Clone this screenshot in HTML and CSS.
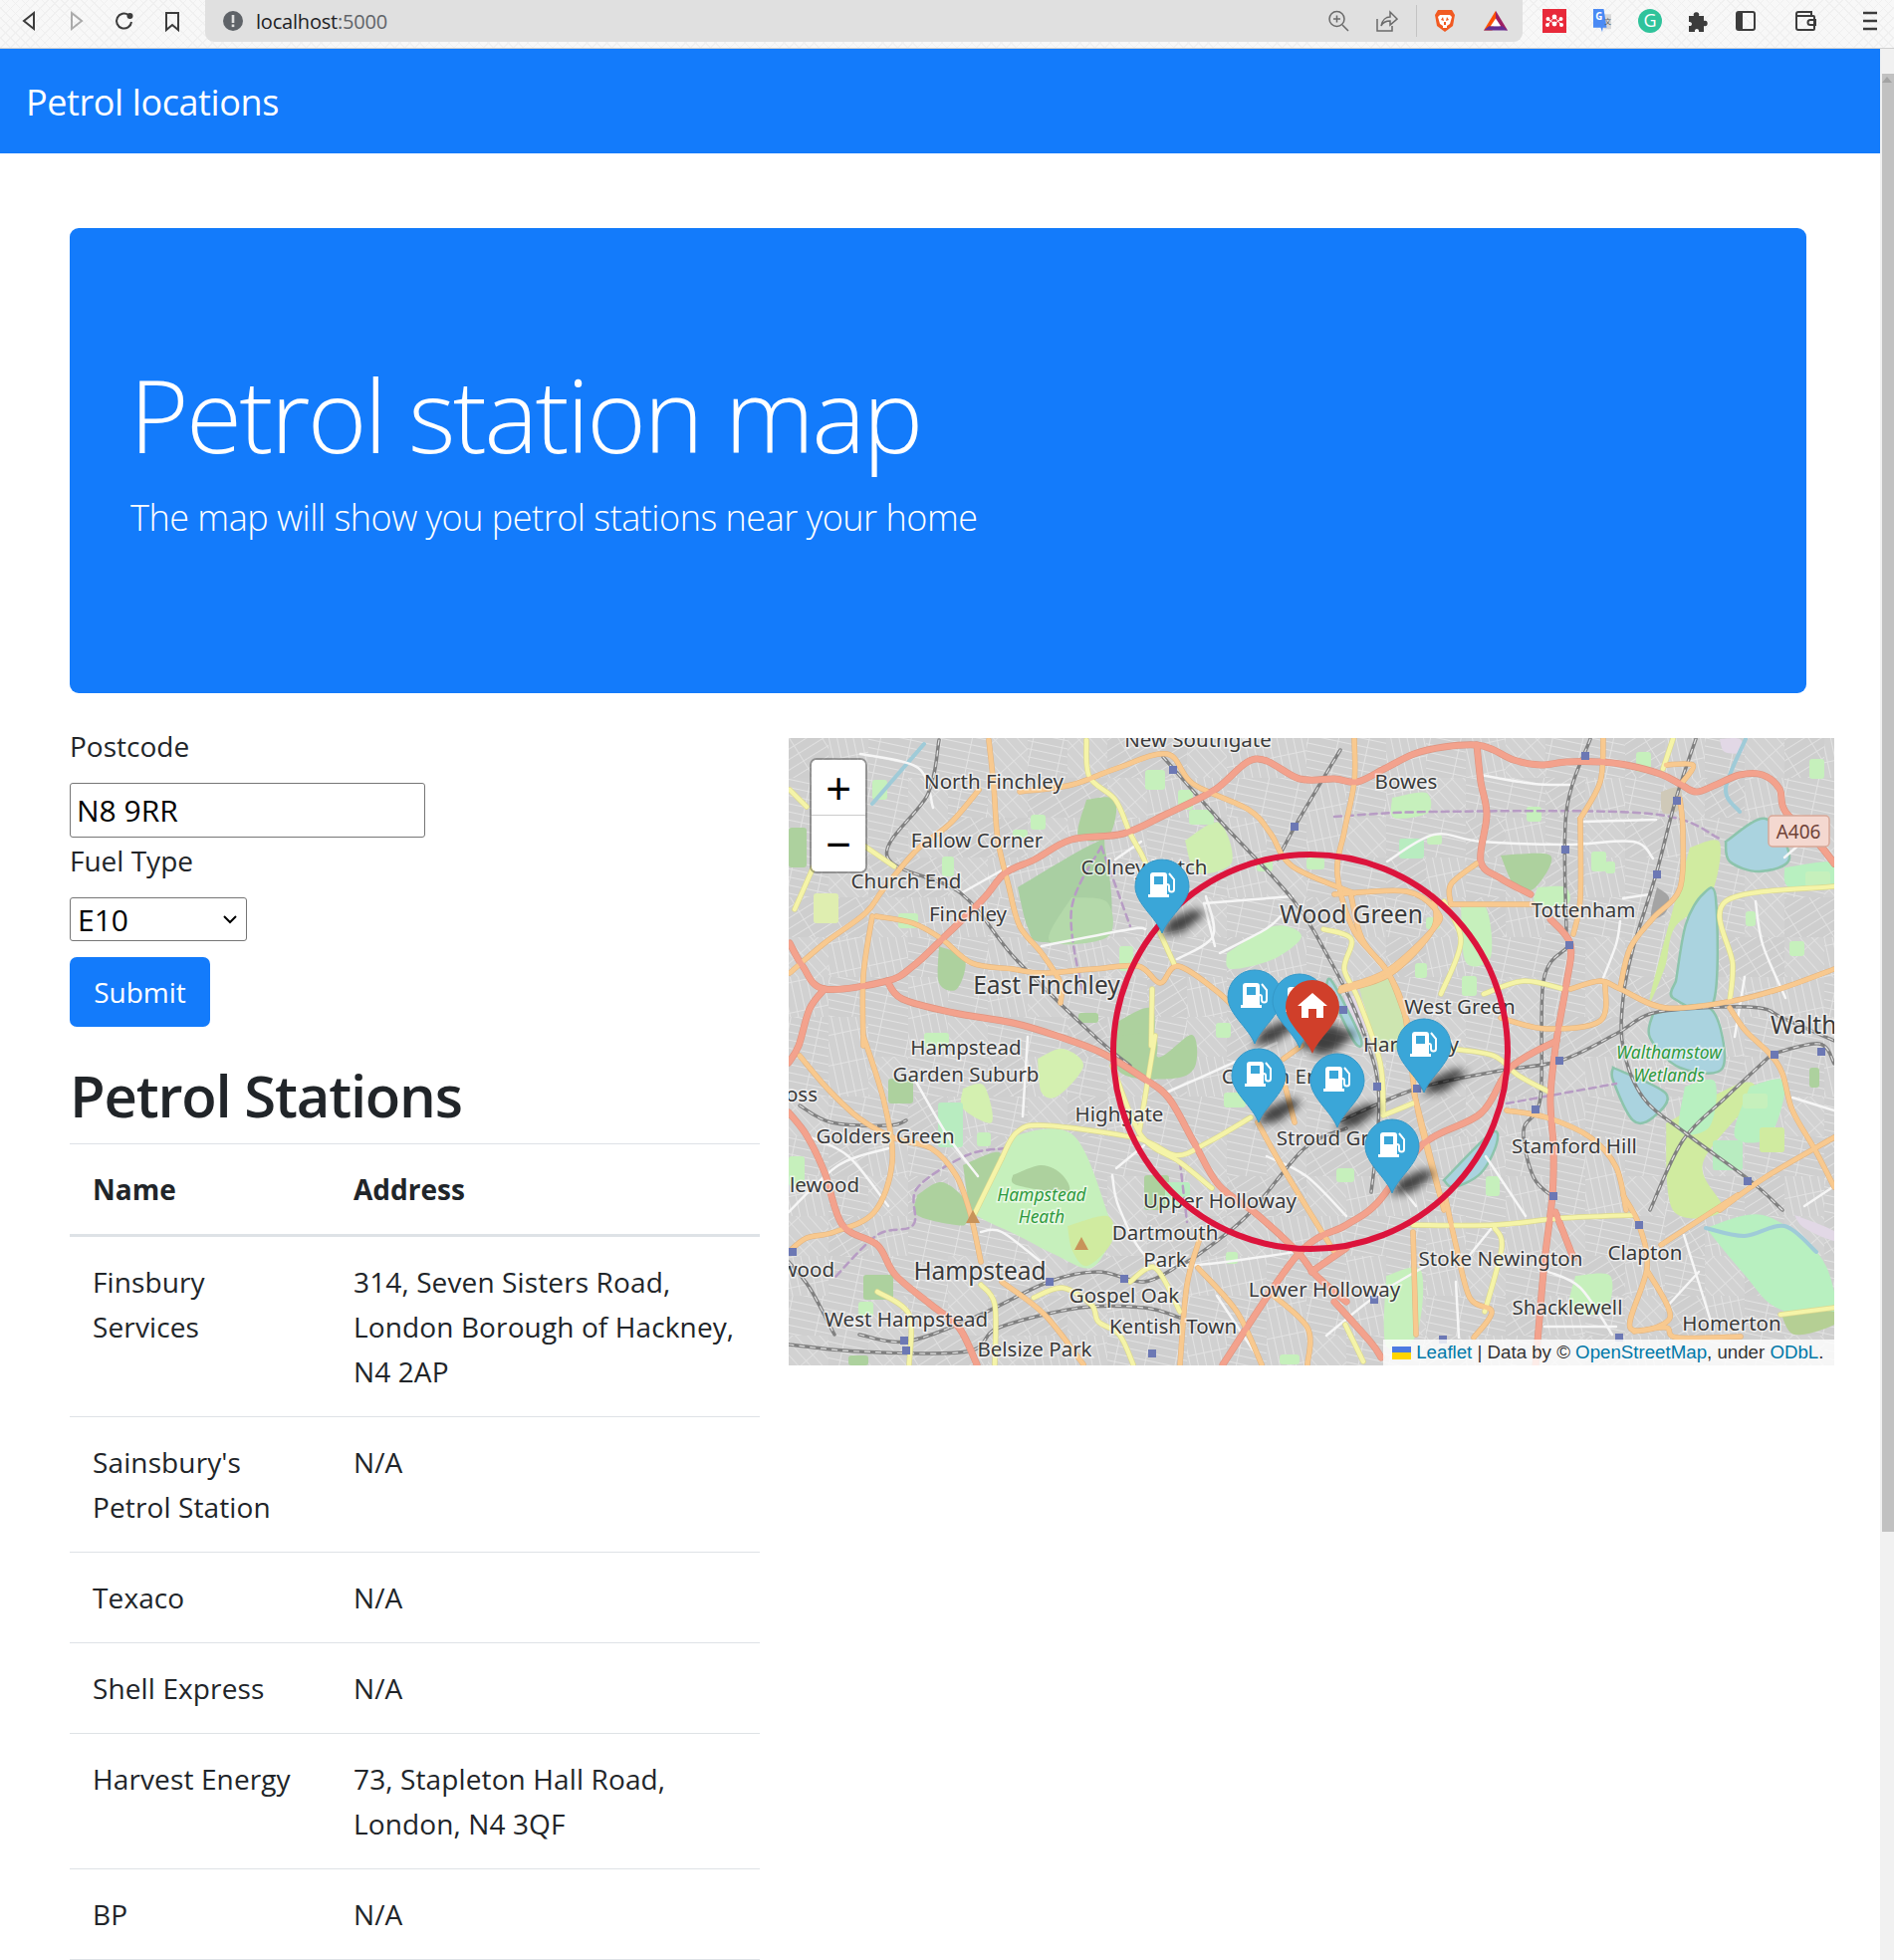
FILE: index.html
```html
<!DOCTYPE html>
<html lang="en">
<head>
    <meta charset="UTF-8">
    <title>Petrol locations</title>
    <link rel="stylesheet" href="styles.css">
</head>
<body>
<div class="toolbar">
    <svg class="ico" viewBox="0 0 24 24"><path d="M17 4 7 12l10 8z" class="line"/></svg>
    <svg class="ico dim" viewBox="0 0 24 24"><path d="M7 4l10 8-10 8z" class="line"/></svg>
    <svg class="ico" viewBox="0 0 24 24"><path d="M19 13a7.500 7.500 0 1 1-3-7" class="line"/><circle cx="17.500" cy="7" r="3" fill="#3c3c3c"/></svg>
    <svg class="ico" viewBox="0 0 24 24"><path d="M6 4h12v17l-6-5-6 5z" class="line"/></svg>
    <div class="address">
        <svg class="lock" viewBox="0 0 20 20"><circle cx="10" cy="10" r="10" fill="#5f6368"/><rect x="8.700" y="4" width="2.600" height="8" fill="#e0e0e0"/><rect x="8.700" y="13.500" width="2.600" height="2.600" fill="#e0e0e0"/></svg>
        <span class="url">localhost<span class="port">:5000</span></span>
        <div class="addr-tools">
            <svg class="ico" viewBox="0 0 24 24"><circle cx="10.500" cy="10" r="7.500" class="thin"/><path d="M16 16l6 6M10.500 6.500v7M7 10h7" class="thin"/></svg>
            <svg class="ico" viewBox="0 0 24 24"><path d="M3 10v12h15v-5M7 17c1-6 5-9 9-9V3l7 7-7 6v-4c-4 0-7 1-9 5z" class="thin"/></svg>
            <span class="sep"></span>
            <svg class="ico brave" viewBox="0 0 24 24"><path d="M5 1h14l3 5-2 11-8 6-8-6L2 6z" fill="#f15a22"/><path d="M7 6h10l2 2-2 7-3 2v2h-4v-2l-3-2-2-7z" fill="#fff"/><path d="M10 8l-2 3 3 1zM14 8l2 3-3 1zM11 13h2v3h-2z" fill="#f15a22"/></svg>
            <svg class="ico" viewBox="0 0 28 24"><path d="M14 0 0 23h10l4-13z" fill="#ff5000"/><path d="M14 0l14 23-8-1-6-12z" fill="#9e1f63"/><path d="M0 23l6-5h16l6 5z" fill="#662d91"/><path d="M14 9l6 9H8z" fill="#fff"/></svg>
        </div>
    </div>
    <div class="extensions">
        <svg class="ico" viewBox="0 0 24 24"><rect width="24" height="24" y="0" fill="#e8293a"/><circle cx="12" cy="8" r="2.400" fill="#fff"/><circle cx="5.500" cy="10" r="2" fill="#fff"/><circle cx="18.500" cy="10" r="2" fill="#fff"/><circle cx="5" cy="16" r="2" fill="#fff"/><circle cx="12" cy="15" r="2.400" fill="#fff"/><circle cx="19" cy="16" r="2" fill="#fff"/><path d="M5.500 10 12 15l6.500-5M5 16l7-8 7 8" stroke="#fff" stroke-width="1" fill="none"/></svg>
        <svg class="ico" viewBox="0 0 24 32"><rect x="14" y="7" width="10" height="20" fill="#d9d9d9"/><path d="M0 0h14l4 25H13l-1 6-2-6H0z" fill="#4a8af4"/><text x="3" y="15" class="ext-g">G</text><text x="15" y="20" class="ext-zh">文</text></svg>
        <svg class="ico" viewBox="0 0 24 24"><circle cx="12" cy="12" r="12" fill="#2fc39b"/><text x="12" y="18" class="ext-gr">G</text></svg>
        <svg class="ico" viewBox="0 0 24 24"><path d="M3 7h5c-2-5 7-5 5 0h5v5c5-2 5 7 0 5v6h-5c1-4-5-4-4 0H3v-6c4 1 4-5 0-4z" fill="#3c3c3c"/></svg>
        <svg class="ico" viewBox="0 0 24 24"><rect x="3" y="3" width="18" height="18" rx="2" class="line"/><rect x="3" y="3" width="6" height="18" fill="#3c3c3c"/></svg>
        <svg class="ico wallet" viewBox="0 0 24 24"><path d="M3 7V5a2 2 0 0 1 2-2h13v4M3 6v13a2 2 0 0 0 2 2h15a1 1 0 0 0 1-1V8a1 1 0 0 0-1-1H4" class="line"/><path d="M22 11h-5a2.500 2.500 0 0 0 0 5h5z" class="line"/></svg>
        <svg class="ico menu" viewBox="0 0 24 24"><path d="M5 4h14M5 12h14M5 20h14" class="line thick"/></svg>
    </div>
</div>

<div class="window">
    <div class="page">
        <nav class="navbar">Petrol locations</nav>
        <div class="content">
            <header class="jumbotron">
                <h1>Petrol station map</h1>
                <p>The map will show you petrol stations near your home</p>
            </header>
            <div class="row">
                <div class="left">
                    <form class="search">
                        <label for="postcode">Postcode</label>
                        <input id="postcode" type="text" value="N8 9RR">
                        <label for="fuel">Fuel Type</label>
                        <select id="fuel"><option>E10</option></select>
                        <button type="button">Submit</button>
                    </form>
                    <h2>Petrol Stations</h2>
                    <table class="stations">
                        <thead>
                            <tr><th class="col-name">Name</th><th>Address</th></tr>
                        </thead>
                        <tbody>
                            <tr><td>Finsbury Services</td><td>314, Seven Sisters Road, London Borough of Hackney, N4 2AP</td></tr>
                            <tr><td>Sainsbury's Petrol Station</td><td>N/A</td></tr>
                            <tr><td>Texaco</td><td>N/A</td></tr>
                            <tr><td>Shell Express</td><td>N/A</td></tr>
                            <tr><td>Harvest Energy</td><td>73, Stapleton Hall Road, London, N4 3QF</td></tr>
                            <tr><td>BP</td><td>N/A</td></tr>
                        </tbody>
                    </table>
                </div>

                <div class="map">
                    <svg class="map-svg" viewBox="0 0 1050 630" width="1050" height="630">
                        <defs>
                            <pattern id="st0" width="30" height="8" patternUnits="userSpaceOnUse" patternTransform="rotate(12)"><rect width="30" height="8" fill="#cfcfcf"/><path d="M0 .5h30M.5 0v8" stroke="#e2e2e2"/></pattern>
                            <pattern id="st1" width="30" height="8" patternUnits="userSpaceOnUse" patternTransform="rotate(78)"><rect width="30" height="8" fill="#d1d1d1"/><path d="M0 .5h30M.5 0v8" stroke="#e2e2e2"/></pattern>
                            <pattern id="st2" width="28" height="9" patternUnits="userSpaceOnUse" patternTransform="rotate(-32)"><rect width="28" height="9" fill="#cecece"/><path d="M0 .5h28M.5 0v9" stroke="#e0e0e0"/></pattern>
                            <pattern id="st3" width="28" height="9" patternUnits="userSpaceOnUse" patternTransform="rotate(48)"><rect width="28" height="9" fill="#d2d2d2"/><path d="M0 .5h28M.5 0v9" stroke="#e0e0e0"/></pattern>
                            <filter id="soft"><feGaussianBlur stdDeviation=".6"/></filter>
                            <filter id="shadow" x="-50%" y="-100%" width="200%" height="300%"><feGaussianBlur stdDeviation="4"/></filter>
                            <g id="pump">
                                <path d="M27 74C21 58 0 44 0 27a27 27 0 0 1 54 0C54 44 33 58 27 74z" class="pin-blue"/>
                                <path d="M15 16a3 3 0 0 1 3-3h11a3 3 0 0 1 3 3v19h2v3H13v-3h2zM19 17v8h9v-8z" fill="#fff" fill-rule="evenodd"/>
                                <path d="M34 14l5 6v10a2.500 2.500 0 0 1-5 0v-3a2 2 0 0 0-2-2" class="hose"/>
                            </g>
                            <g id="home">
                                <path d="M27 74C21 58 0 44 0 27a27 27 0 0 1 54 0C54 44 33 58 27 74z" fill="#d03f2a"/>
                                <path d="M27 13l15 13h-4v12h-7v-9h-8v9h-7V26h-4z" fill="#fff"/>
                            </g>
                            <path id="cast" d="M-2 2L8-14 32-24 44-20 20-1z" fill="#000"/>
                        </defs>

                        <g filter="url(#soft)">
                            <g id="tiles"></g>
                            <g id="areas"></g>
                            <g id="roads"></g>
                        </g>

                        <g class="labels">
                            <text x="411" y="9">New Southgate</text>
                            <text x="206" y="51">North Finchley</text>
                            <text x="189" y="110">Fallow Corner</text>
                            <text x="357" y="137">Colney Hatch</text>
                            <text x="118" y="151">Church End</text>
                            <text x="180" y="184">Finchley</text>
                            <text x="259" y="257" class="big">East Finchley</text>
                            <text x="565" y="186" class="big">Wood Green</text>
                            <text x="620" y="51">Bowes</text>
                            <text x="798" y="180">Tottenham</text>
                            <text x="674" y="277">West Green</text>
                            <text x="625" y="315">Harringay</text>
                            <text x="986" y="297" class="big start">Walth</text>
                            <text x="789" y="417">Stamford Hill</text>
                            <text x="178" y="318">Hampstead</text>
                            <text x="178" y="345">Garden Suburb</text>
                            <text x="29" y="365" class="end">oss</text>
                            <text x="97" y="407">Golders Green</text>
                            <text x="71" y="456" class="end">lewood</text>
                            <text x="46" y="541" class="end">wood</text>
                            <text x="332" y="385">Highgate</text>
                            <text x="433" y="472">Upper Holloway</text>
                            <text x="378" y="504">Dartmouth</text>
                            <text x="378" y="531">Park</text>
                            <text x="192" y="544" class="big">Hampstead</text>
                            <text x="337" y="567">Gospel Oak</text>
                            <text x="118" y="591">West Hampstead</text>
                            <text x="386" y="598">Kentish Town</text>
                            <text x="247" y="621">Belsize Park</text>
                            <text x="538" y="561">Lower Holloway</text>
                            <text x="715" y="530">Stoke Newington</text>
                            <text x="860" y="524">Clapton</text>
                            <text x="782" y="579">Shacklewell</text>
                            <text x="947" y="595">Homerton</text>
                            <text x="554" y="409">Stroud Green</text>
                            <text x="490" y="347">Crouch End</text>
                            <text x="254" y="465" class="park">Hampstead</text>
                            <text x="254" y="487" class="park">Heath</text>
                            <text x="884" y="322" class="park">Walthamstow</text>
                            <text x="884" y="345" class="park">Wetlands</text>
                        </g>
                        <g class="shield">
                            <rect x="984" y="78" width="61" height="31" rx="4"/>
                            <text x="1014" y="101">A406</text>
                        </g>

                        <circle cx="524" cy="315" r="198" class="radius"/>

                        <g filter="url(#shadow)" opacity=".7">
                            <use href="#cast" x="375" y="196"/>
                            <use href="#cast" x="468" y="307"/>
                            <use href="#cast" x="513" y="311"/>
                            <use href="#cast" x="526" y="317"/>
                            <use href="#cast" x="472" y="386"/>
                            <use href="#cast" x="551" y="391"/>
                            <use href="#cast" x="638" y="356"/>
                            <use href="#cast" x="606" y="457"/>
                        </g>
                        <use href="#pump" x="348" y="122"/>
                        <use href="#pump" x="441" y="233"/>
                        <use href="#pump" x="486" y="237"/>
                        <use href="#pump" x="445" y="312"/>
                        <use href="#pump" x="524" y="317"/>
                        <use href="#pump" x="611" y="282"/>
                        <use href="#pump" x="579" y="383"/>
                        <use href="#home" x="499" y="243"/>
                    </svg>

                    <div class="zoom-ctl">
                        <a class="zoom-btn">+</a>
                        <a class="zoom-btn">&minus;</a>
                    </div>
                    <div class="attribution">
                        <span class="flag"></span>
                        <a>Leaflet</a> | Data by © <a>OpenStreetMap</a>, under <a>ODbL</a>.
                    </div>
                </div>
            </div>
        </div>
    </div>
    <div class="scrollbar">
        <div class="scroll-up"></div>
        <div class="scroll-thumb"></div>
    </div>
</div>
<script src="map.js"></script>
</body>
</html>
```

FILE: styles.css
```css
*{
    box-sizing: border-box;
}
html, body{
    margin: 0;
    height: 1968px;
    overflow: hidden;
}
body{
    font-family: "Open Sans", "Noto Sans", sans-serif;
    font-size: 28px;
    line-height: 45px;
    letter-spacing: 0;
    color: #212529;
    background: #fff;
}

/* browser chrome */
.toolbar{
    display: flex;
    align-items: flex-start;
    gap: 24px;
    height: 49px;
    padding-left: 17px;
    border-bottom: 1px solid #cfcfcf;
    background-color: #f8f8f8;
    background-image: repeating-linear-gradient(45deg, #f0f0f0 0 1px, transparent 1px 7px), repeating-linear-gradient(-45deg, #f0f0f0 0 1px, transparent 1px 7px);
}
.ico{
    flex: none;
    width: 24px;
    height: 24px;
    margin-top: 9px;
}
.ico.dim{
    opacity: .4;
}
.line{
    fill: none;
    stroke: #3c3c3c;
    stroke-width: 2;
}
.line.thick{
    stroke-width: 2.500;
}
.thin{
    fill: none;
    stroke: #6a6a6a;
    stroke-width: 1.500;
}
.address{
    display: flex;
    align-items: center;
    width: 1323px;
    height: 42px;
    margin-left: -3px;
    padding: 0 15px 0 18px;
    border-radius: 0 0 9px 9px;
    background: #e0e0e0;
}
.address .ico{
    margin-top: 0;
}
.lock{
    width: 20px;
    height: 20px;
    margin-right: 13px;
}
.url{
    font-size: 20px;
    letter-spacing: -.2px;
    color: #202124;
}
.port{
    color: #5f6368;
}
.addr-tools{
    display: flex;
    align-items: center;
    gap: 24px;
    margin-left: auto;
}
.sep{
    width: 1px;
    height: 32px;
    margin: 0 -8px 0 -6px;
    background: #c4c4c4;
}
.brave{
    margin-right: 3px;
}
.extensions{
    display: flex;
    gap: 24px;
    margin-left: -4px;
}
.wallet{
    margin-left: 12px;
}
.menu{
    margin-left: 17px;
}
.ext-g{
    font: bold 13px "Open Sans", sans-serif;
    fill: #fff;
}
.ext-zh{
    font: 9px "Noto Sans CJK SC", sans-serif;
    fill: #5f6368;
}
.ext-gr{
    font: 18px "Open Sans", sans-serif;
    fill: #fff;
    text-anchor: middle;
}

.window{
    display: flex;
    height: 1919px;
}
.page{
    width: 1888px;
    overflow: hidden;
}
.scrollbar{
    width: 14px;
    background: #f1f1f1;
}
.scroll-up{
    width: 0;
    height: 25px;
    margin: 0 auto;
    border-left: 5px solid transparent;
    border-right: 5px solid transparent;
    border-bottom: 6px solid #a3a3a3;
    transform: translateY(9px);
}
.scroll-thumb{
    height: 1464px;
    margin-left: 2px;
    background: #c1c1c1;
}

/* page */
.navbar{
    height: 105px;
    padding: 31px 0 0 26px;
    font-size: 36px;
    letter-spacing: -.4px;
    color: #fff;
    background: #137bfb;
}
.content{
    padding: 75px 46px 0 70px;
}
.jumbotron{
    height: 467px;
    margin-right: 28px;
    padding: 124px 0 0 60px;
    border-radius: 9px;
    color: #fff;
    background: #137bfb;
}
.jumbotron h1{
    margin: 0;
    font-size: 102px;
    font-weight: 300;
    line-height: 126px;
    letter-spacing: -2.700px;
}
.jumbotron p{
    margin: 13px 0 0 1px;
    font-size: 36px;
    font-weight: 300;
    line-height: 56px;
    letter-spacing: -.48px;
}
.row{
    display: flex;
    gap: 29px;
    margin-top: 31px;
}
.left{
    flex: none;
    width: 693px;
}
label{
    display: block;
    margin-bottom: 14px;
}
input, select{
    display: block;
    font-family: inherit;
    font-size: 30px;
    color: #000;
    background: #fff;
    border: 1px solid #767676;
    border-radius: 3px;
}
input{
    width: 357px;
    height: 55px;
    margin-bottom: 1px;
    padding: 0 6px;
}
select{
    width: 178px;
    height: 44px;
    padding: 0 7px;
    appearance: none;
    background-image: url("data:image/svg+xml,%3Csvg xmlns='http://www.w3.org/2000/svg' width='16' height='10'%3E%3Cpath d='M2 2l6 6 6-6' fill='none' stroke='%23000' stroke-width='2'/%3E%3C/svg%3E");
    background-repeat: no-repeat;
    background-position: right 8px center;
}
.search button{
    display: block;
    width: 141px;
    height: 70px;
    margin-top: 16px;
    font: inherit;
    color: #fff;
    border: 0;
    border-radius: 7px;
    background: #137bfb;
}
h2{
    margin: 33px 0 12px 0;
    font-size: 58px;
    font-weight: 600;
    line-height: 72px;
    letter-spacing: -1.200px;
}
.stations{
    width: 693px;
    table-layout: fixed;
    border-collapse: collapse;
    border-top: 1px solid #dee2e6;
}
.stations th, .stations td{
    padding: 22.500px 23px;
    text-align: left;
    vertical-align: top;
}
.stations th{
    border-bottom: 3px solid #dee2e6;
}
.stations td{
    border-bottom: 1px solid #dee2e6;
    letter-spacing: .12px;
}
.col-name{
    width: 262px;
}

/* map */
.map{
    position: relative;
    flex: none;
    width: 1050px;
    height: 630px;
    margin-top: 14px;
    overflow: hidden;
    background: #d0d0d0;
}
.map-svg{
    display: block;
}
.labels text{
    font-family: "Noto Sans", sans-serif;
    font-size: 20.500px;
    text-anchor: middle;
    fill: #3a3a3a;
    stroke: rgba(255, 255, 255, .65);
    stroke-width: 3px;
    paint-order: stroke;
}
.labels .big{
    font-size: 24.500px;
}
.labels .end{
    text-anchor: end;
}
.labels .start{
    text-anchor: start;
}
.labels .park{
    font-size: 17.500px;
    font-style: italic;
    fill: #2f9a3e;
}
.shield rect{
    fill: #f4d8d0;
    stroke: #d8a898;
    stroke-width: 1.500;
}
.shield text{
    font: 19px "Noto Sans", sans-serif;
    text-anchor: middle;
    fill: #6f4238;
}
.radius{
    fill: none;
    stroke: #dc143c;
    stroke-width: 6;
}
.pin-blue{
    fill: #3aa6d8;
    stroke: #3498c8;
    stroke-width: 1;
}
.hose{
    fill: none;
    stroke: #fff;
    stroke-width: 2;
}
.zoom-ctl{
    position: absolute;
    left: 21px;
    top: 20px;
    width: 58px;
    border: 2px solid rgba(0, 0, 0, .3);
    border-radius: 7px;
    background-clip: padding-box;
}
.zoom-btn{
    display: block;
    height: 56px;
    font-family: "Liberation Sans", sans-serif;
    font-size: 44px;
    line-height: 58px;
    text-align: center;
    color: #000;
    background: #fff;
}
.zoom-btn:first-child{
    border-bottom: 1px solid #ccc;
    border-radius: 5px 5px 0 0;
}
.zoom-btn:last-child{
    border-radius: 0 0 5px 5px;
}
.attribution{
    position: absolute;
    right: 0;
    bottom: 0;
    width: 453px;
    height: 26px;
    padding-left: 9px;
    font-family: "Liberation Sans", sans-serif;
    font-size: 18.700px;
    line-height: 26px;
    white-space: nowrap;
    color: #333;
    background: rgba(255, 255, 255, .8);
}
.attribution a{
    color: #0078a8;
}
.flag{
    display: inline-block;
    width: 19px;
    height: 13px;
    margin-right: 0;
    vertical-align: -1px;
    background: linear-gradient(#4c7be1 50%, #ffd500 50%);
}
```

FILE: map.js
```js
// street tiles, parks, water and roads for the map, coordinates are map pixels
var NS = 'http://www.w3.org/2000/svg';

function add(parent, name, attrs) {
    var el = document.createElementNS(NS, name);
    for (var k in attrs) el.setAttribute(k, attrs[k]);
    parent.appendChild(el);
    return el;
}

// catmull-rom through the points so roads bend instead of kink
function smooth(p) {
    var d = 'M' + p[0] + ' ' + p[1];
    for (var i = 0; i < p.length - 2; i += 2) {
        var x0 = i ? p[i - 2] : p[i], y0 = i ? p[i - 1] : p[i + 1];
        var x1 = p[i], y1 = p[i + 1], x2 = p[i + 2], y2 = p[i + 3];
        var x3 = i + 4 < p.length ? p[i + 4] : x2, y3 = i + 4 < p.length ? p[i + 5] : y2;
        d += 'C' + (x1 + (x2 - x0) / 6) + ' ' + (y1 + (y2 - y0) / 6) + ' ' +
            (x2 - (x3 - x1) / 6) + ' ' + (y2 - (y3 - y1) / 6) + ' ' + x2 + ' ' + y2;
    }
    return d;
}

var tiles = document.getElementById('tiles');
var seed = 7;
for (var ty = 0; ty < 630; ty += 40) {
    for (var tx = 0; tx < 1050; tx += 40) {
        seed = (seed * 31 + 11) % 101;
        add(tiles, 'rect', {x: tx, y: ty, width: 41, height: 41, fill: 'url(#st' + (seed % 4) + ')'});
    }
}

var areas = document.getElementById('areas');
var WATER = '#aad3df';
var AREAS = [
    ['#a9cfa2', [230,150, 306,106, 318,112, 320,195, 255,205, 240,190]],
    ['#b4d9aa', [284,160, 320,165, 320,200, 262,204]],
    ['#add19e', [299,62, 328,62, 321,99, 291,99]],
    ['#add19e', [151,209, 177,222, 169,252, 151,246]],
    ['#c6f0bc', [214,422, 229,399, 286,399, 321,479, 325,499, 304,532, 268,519, 229,499, 193,482, 187,472]],
    ['#add19e', [129,459, 154,446, 179,466, 179,486, 168,489, 129,479]],
    ['#add19e', [175,429, 207,416, 211,426, 186,476]],
    ['#add19e', [225,439, 254,429, 275,439, 279,456, 229,449]],
    ['#d0eba0', [280,490, 320,480, 325,505, 300,530, 285,515]],
    ['#add19e', [330,285, 365,272, 370,320, 405,298, 408,330, 385,342, 332,335]],
    ['#d4f0b0', [250,322, 275,312, 296,329, 271,359, 254,356]],
    ['#d4f0b0', [175,352, 196,349, 204,386, 175,372]],
    ['#add19e', [332,299, 368,299, 364,332, 336,319]],
    ['#c6f0bc', [440,216, 487,189, 515,199, 487,222, 444,232]],
    ['#cfeeb0', [398,103, 432,85, 445,125, 410,135]],
    ['#cde5b0', [572,246, 610,246, 618,306, 590,306]],
    ['#e2d8e6', [558,259, 575,262, 582,292, 566,290]],
    ['#e2d8e6', [1010,479, 1050,495, 1050,505, 1020,492]],
    ['#e2d8e6', [935,1, 955,1, 958,14, 940,14]],
    ['#a4a4a4', [872,150, 884,160, 880,176, 866,180]],
    ['#cfc9b8', [876,54, 895,50, 895,71, 878,75]],
    ['#c6f0bc', [606,60, 640,55, 642,75, 608,80]],
    ['#add19e', [715,118, 765,118, 750,150, 730,150]],
    ['#c6f0bc', [752,150, 780,150, 782,167, 750,167]],
    ['#c6f0bc', [675,170, 700,170, 705,220, 680,225]],
    ['#d0eba0', [881,387, 955,347, 968,361, 918,427, 938,474, 888,474]],
    ['#d0eba0', [905,110, 935,105, 925,160, 890,190, 880,230, 865,260]],
    ['#b8f0c0', [921,492, 978,479, 1032,516, 1050,556, 1050,586, 992,572, 960,539]],
    ['#b5cf94', [996,576, 1050,576, 1050,589, 1010,599]],
    ['#c6f0bc', [600,540, 635,535, 630,600, 600,610]],
    ['#c6f0bc', [790,540, 825,540, 820,575, 785,575]],
    ['#b8f0c0', [1000,130, 1050,125, 1050,150, 1005,150]],
    ['#b8f0c0', [900,350, 930,345, 925,390, 895,395]],
    ['#b8f0c0', [965,350, 1000,345, 985,400, 950,400]],
    [WATER, [891,244, 901,187, 918,157, 931,161, 928,267, 888,261]],
    [WATER, [868,277, 925,271, 938,331, 895,331, 865,301]],
    [WATER, [828,331, 881,357, 868,381, 848,384, 828,344]],
    [WATER, [941,104, 981,81, 1005,121, 975,134, 945,124]],
    [WATER, [658,444, 705,397, 711,407, 695,437, 668,451]],
    [WATER, [540,248, 546,245, 574,300, 568,305]]
];
AREAS.forEach(function (a) {
    var pts = a[1];
    var attrs = {d: smooth(pts.concat(pts.slice(0, 2))) + 'Z', fill: a[0]};
    if (a[0] === WATER) {
        attrs.stroke = '#8cc4ac';
        attrs['stroke-width'] = 2.500;
    }
    add(areas, 'path', attrs);
});

// small parks and playing fields: x, y, w, h, colour
var PATCHES = [
    [84,42,15,20,'#c6f0bc'], [25,156,25,30,'#dfeeb0'], [110,176,20,15,'#c6f0bc'], [243,77,15,15,'#c6f0bc'],
    [154,119,12,20,'#c6f0bc'], [225,92,15,8,'#c6f0bc'], [402,72,25,15,'#c6f0bc'], [358,32,20,20,'#c6f0bc'],
    [391,52,15,20,'#c6f0bc'], [332,209,14,25,'#c6f0bc'], [291,276,20,10,'#add19e'], [136,296,25,15,'#c6f0bc'],
    [100,342,25,25,'#add19e'], [150,366,25,45,'#b8ecc0'], [189,396,14,14,'#c6f0bc'], [75,539,30,25,'#add19e'],
    [70,566,15,15,'#c6f0bc'], [357,439,25,35,'#add19e'], [378,446,25,25,'#b8ecc0'], [439,516,12,12,'#c6f0bc'],
    [493,619,20,10,'#c6f0bc'], [437,356,22,15,'#c6f0bc'], [429,286,15,15,'#c6f0bc'], [676,239,15,20,'#c6f0bc'],
    [629,226,12,15,'#c6f0bc'], [741,69,15,15,'#c6f0bc'], [613,101,25,20,'#b8ecc0'], [641,97,15,10,'#c6f0bc'],
    [806,114,15,20,'#c6f0bc'], [820,124,10,12,'#c6f0bc'], [851,14,15,20,'#c6f0bc'], [1025,21,15,20,'#c6f0bc'],
    [961,174,10,15,'#c6f0bc'], [1005,204,15,15,'#c6f0bc'], [1021,134,25,15,'#c6f0bc'], [1025,331,10,20,'#add19e'],
    [975,391,25,25,'#d0eba0'], [928,404,30,30,'#b8ecc0'], [958,357,25,15,'#c6f0bc'], [550,432,18,14,'#c6f0bc'],
    [470,120,16,14,'#c6f0bc'], [520,120,18,12,'#c6f0bc'], [640,180,14,12,'#c6f0bc'], [700,440,14,20,'#c6f0bc'],
    [60,620,20,10,'#add19e'], [0,420,16,30,'#c6f0bc'], [0,90,18,40,'#add19e']
];
PATCHES.forEach(function (p) {
    add(areas, 'rect', {x: p[0], y: p[1], width: p[2], height: p[3], rx: 3, fill: p[4]});
});

var WHITE = [
    [0,476, 50,429, 100,412], [329,432, 357,409], [325,439, 332,472, 361,522, 411,529, 536,512],
    [193,496, 214,496, 257,529], [433,216, 479,192, 494,179], [379,356, 440,329, 490,306],
    [419,159, 426,199, 390,222], [254,209, 343,192, 358,192], [173,156, 221,129], [417,166, 428,209],
    [417,166, 506,159], [328,122, 354,104], [601,124, 648,97, 695,104, 781,107, 848,104, 868,121],
    [798,84, 871,82], [838,161, 865,157], [835,184, 831,207, 818,241], [971,164, 978,207, 1001,261],
    [695,37, 748,46, 788,47], [763,536, 795,552, 827,599], [670,546, 673,602], [759,591, 831,591],
    [899,499, 928,592], [881,572, 914,536], [684,519, 706,492], [1050,374, 1008,361],
    [72,16, 130,30, 145,70], [20,400, 60,420, 100,470], [125,340, 160,400, 190,440], [240,300, 235,380],
    [480,420, 520,440, 560,480], [590,420, 630,470], [430,560, 470,620], [540,600, 590,560, 640,530],
    [700,420, 740,480], [950,300, 960,240], [1020,470, 1050,450], [1000,120, 1040,85]
];
var PURPLE = [
    [548,79, 648,74, 865,76, 935,101], [721,367, 831,347], [314,109, 284,172, 295,256], [314,109, 343,189],
    [218,412, 179,419, 129,452, 125,489, 89,499, 46,542], [393,426, 400,486]
];
var WATERWAY = [[136,6, 84,66], [961,1, 941,51, 955,74], [921,492, 960,500, 1000,490, 1032,516]];
var YELLOW = [
    [299,2, 302,39, 328,62, 343,96, 354,116, 360,129], [373,196, 388,229], [365,252, 364,309],
    [368,299, 361,342, 352,396], [325,329, 354,399, 393,426, 425,452], [1,52, 18,69], [77,109, 106,129],
    [25,129, 6,172], [214,422, 229,396, 257,389, 350,402, 389,419, 421,406, 464,381], [214,422, 186,479],
    [89,556, 121,579, 121,629], [193,549, 207,569, 207,629], [246,562, 275,552, 304,569, 311,586, 332,599, 346,629],
    [343,546, 368,532, 393,576], [537,192, 565,202, 558,232, 572,262, 594,326, 597,376], [597,379, 629,366],
    [665,312, 708,319, 733,339, 765,356], [698,257, 738,244, 778,252], [655,257, 675,204, 658,164],
    [1050,149, 941,164, 948,227, 945,264], [627,489, 709,489, 777,482, 849,479], [709,492, 716,512, 699,576],
    [996,579, 1050,572], [559,589, 577,626], [888,1, 878,31]
];
var ORANGE = [
    [201,2, 206,49, 210,102, 221,149, 232,189, 254,216, 273,246, 273,266],
    [191,52, 162,86, 129,112, 95,152, 77,176, 36,206, 1,236],
    [88,179, 125,186, 154,202, 184,226, 225,232, 254,236, 306,232, 351,229, 373,246, 391,229, 432,256, 465,289],
    [84,179, 75,239, 75,309], [232,54, 284,47, 328,31, 380,16, 406,46, 462,72, 484,96, 506,129, 568,156],
    [565,159, 576,202, 604,239, 619,279, 629,359, 640,409, 654,459], [554,254, 604,237, 647,192, 647,159],
    [665,167, 748,167], [665,167, 665,147, 691,126], [548,157, 620,154, 651,174, 648,191, 601,234, 555,251],
    [795,81, 795,161, 788,197], [795,81, 815,44, 818,1], [895,61, 898,94, 895,151, 868,181, 845,211, 835,251],
    [881,27, 908,27, 898,44], [785,252, 815,244, 835,252, 881,271, 948,264, 998,251, 1050,232],
    [715,281, 761,292, 815,284, 820,247], [945,271, 961,294, 985,317, 998,337, 1008,374, 1031,414, 1050,451],
    [935,474, 981,441, 1050,401], [721,374, 761,381, 805,401, 831,431, 841,474], [628,357, 641,407, 658,474],
    [568,1, 568,44, 558,94, 551,137, 568,194, 601,234, 621,284], [838,459, 854,489, 862,532, 845,592, 885,582, 863,536],
    [876,509, 953,459], [849,596, 881,592, 892,602, 956,601], [659,459, 670,509, 684,562, 706,576, 688,602],
    [627,496, 630,599], [75,299, 96,366, 104,426, 86,476, 46,496, 18,502, 0,516],
    [11,319, 39,352, 71,382, 107,402, 143,412, 168,439, 182,476, 193,526], [214,546, 257,579, 296,629],
    [471,386, 493,426, 525,479, 550,519], [494,332, 508,386], [497,322, 515,309], [414,499, 400,549, 393,629],
    [411,532, 450,576, 475,629], [482,556, 521,592, 521,629]
];
var SALMON = [
    [1050,126, 1035,107, 1001,74, 995,51, 978,37, 955,37, 931,47, 911,54, 895,46, 875,36, 841,27, 815,24, 781,24, 755,27, 728,22, 708,12, 691,7, 658,9, 628,16, 598,31, 571,44, 548,41, 513,41, 469,21, 428,52, 380,76, 336,96, 284,102, 247,122, 217,136, 195,162, 154,202, 125,229, 99,244, 36,252, 14,229, 1,206],
    [36,252, 21,272, 10,309, 0,326], [99,244, 114,262, 166,276, 225,286, 269,299, 314,316, 357,342, 382,362, 407,406, 432,449, 471,479, 511,516, 529,539, 560,566],
    [0,376, 18,399, 36,436, 54,489, 89,509, 107,539, 143,569, 171,592, 189,629],
    [691,7, 695,44, 701,77, 695,124, 715,141, 745,157], [765,182, 785,207, 781,247, 771,304, 765,361, 768,411, 767,459, 759,526, 752,606, 750,630],
    [770,476, 788,522], [771,304, 725,331, 695,377, 638,407, 591,467, 560,489, 511,519, 436,629],
    [525,536, 560,512], [548,566, 584,606, 595,622], [1030,100, 1050,126]
];
var RAIL = [
    [376,19, 432,82, 506,162, 543,222, 568,272, 590,336, 592,392, 585,456],
    [151,2, 140,56, 99,119, 173,156, 228,222, 310,302, 343,329], [554,12, 510,86, 491,122],
    [805,1, 781,74, 781,194], [781,211, 758,244, 755,361, 738,394, 748,441, 768,461],
    [911,1, 891,61, 871,137, 848,211, 838,261, 838,311, 858,361, 901,397, 965,444, 998,474],
    [555,384, 631,352, 715,334, 775,324, 831,297, 865,277, 915,271, 975,271, 998,281, 1050,304],
    [988,317, 1035,307, 1050,327], [988,317, 941,361, 898,404, 865,474],
    [11,369, 43,386, 100,389, 118,384], [0,609, 71,616, 179,616, 211,592, 293,572, 357,572, 393,582],
    [71,599, 118,606, 186,582, 261,546, 311,536, 357,546, 393,529, 411,519, 461,479, 518,412, 560,392],
    [0,526, 21,552, 46,599]
];

function lines(list, style) {
    var roads = document.getElementById('roads');
    var g = add(roads, 'g', style);
    g.setAttribute('fill', 'none');
    g.setAttribute('stroke-linecap', 'round');
    list.forEach(function (p) { add(g, 'path', {d: smooth(p)}); });
}

lines(WATERWAY, {stroke: '#9fcbd8', 'stroke-width': 4});
lines(PURPLE, {stroke: '#b79cc4', 'stroke-width': 2.500, 'stroke-dasharray': '7 5'});
lines(WHITE, {stroke: '#f6f6f6', 'stroke-width': 2.500});
lines(RAIL, {stroke: '#808080', 'stroke-width': 3.500});
lines(RAIL, {stroke: '#e2e2e2', 'stroke-width': 1.200, 'stroke-dasharray': '5 6'});
lines(YELLOW, {stroke: '#dcd98f', 'stroke-width': 5.500});
lines(ORANGE, {stroke: '#e2b27c', 'stroke-width': 5.500});
lines(SALMON, {stroke: '#df937f', 'stroke-width': 7});
lines(YELLOW, {stroke: '#f5f4a8', 'stroke-width': 4.200});
lines(ORANGE, {stroke: '#f8c98f', 'stroke-width': 4.500});
lines(SALMON, {stroke: '#f3a28d', 'stroke-width': 5.800});

var STATIONS = [800,18, 892,63, 780,112, 872,137, 784,208, 774,324, 990,318, 1037,315, 750,373, 963,445, 768,460, 631,352, 591,350, 557,273, 4,516, 262,546, 337,543, 116,605, 118,615, 365,618, 386,32, 508,89, 588,564, 657,604, 834,602, 854,489];
var roadsLayer = document.getElementById('roads');
for (var s = 0; s < STATIONS.length; s += 2) {
    add(roadsLayer, 'rect', {x: STATIONS[s] - 4, y: STATIONS[s + 1] - 4, width: 8, height: 8, fill: '#6c78b4'});
}
[[185,481], [294,508]].forEach(function (t) {
    add(roadsLayer, 'path', {d: 'M' + (t[0] - 7) + ' ' + (t[1] + 6) + 'h14l-7-13z', fill: '#c8935a'});
});
```
